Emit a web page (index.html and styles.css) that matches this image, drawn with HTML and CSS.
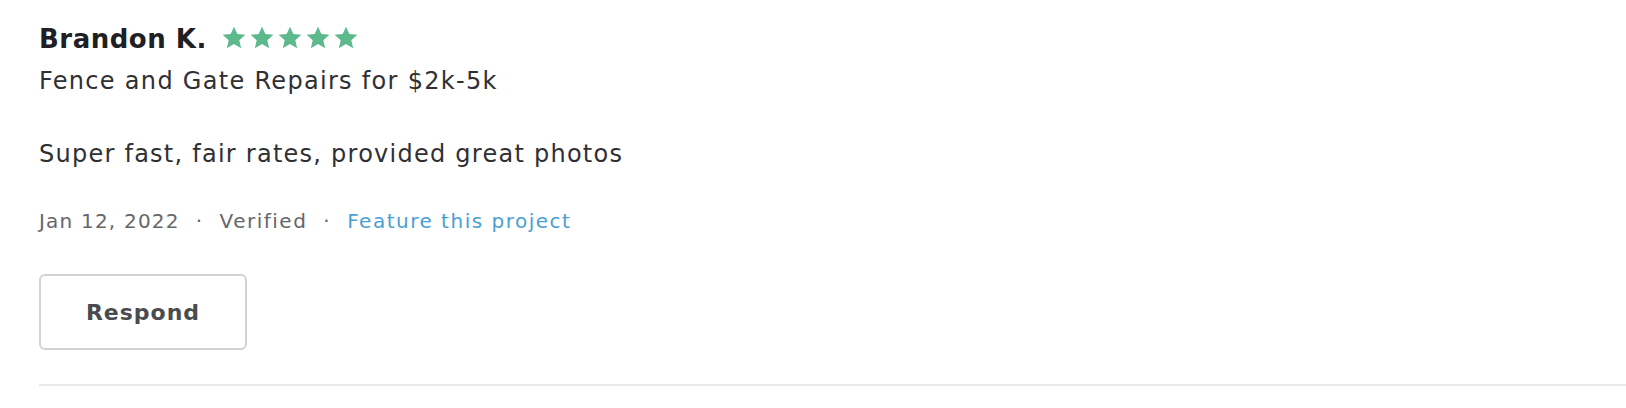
FILE: index.html
```html
<!DOCTYPE html>
<html>
<head>
<meta charset="utf-8">
<link rel="stylesheet" href="styles.css">
</head>
<body>
<div class="review">
  <div class="header">
    <span class="name">Brandon K.</span>
    <span class="stars">
      <svg viewBox="0 0 24 24" class="star"><path d="M12 1.5l3.1 6.9 7.4.7-5.6 5 1.7 7.4L12 17.6l-6.6 3.9 1.7-7.4-5.6-5 7.4-.7z"/></svg>
      <svg viewBox="0 0 24 24" class="star"><path d="M12 1.5l3.1 6.9 7.4.7-5.6 5 1.7 7.4L12 17.6l-6.6 3.9 1.7-7.4-5.6-5 7.4-.7z"/></svg>
      <svg viewBox="0 0 24 24" class="star"><path d="M12 1.5l3.1 6.9 7.4.7-5.6 5 1.7 7.4L12 17.6l-6.6 3.9 1.7-7.4-5.6-5 7.4-.7z"/></svg>
      <svg viewBox="0 0 24 24" class="star"><path d="M12 1.5l3.1 6.9 7.4.7-5.6 5 1.7 7.4L12 17.6l-6.6 3.9 1.7-7.4-5.6-5 7.4-.7z"/></svg>
      <svg viewBox="0 0 24 24" class="star"><path d="M12 1.5l3.1 6.9 7.4.7-5.6 5 1.7 7.4L12 17.6l-6.6 3.9 1.7-7.4-5.6-5 7.4-.7z"/></svg>
    </span>
  </div>
  <div class="project">Fence and Gate Repairs for $2k-5k</div>
  <p class="text">Super fast, fair rates, provided great photos</p>
  <div class="meta">
    <span class="date">Jan 12, 2022</span>
    <span class="dot">·</span>
    <span>Verified</span>
    <span class="dot">·</span>
    <a class="link" href="#">Feature this project</a>
  </div>
  <button class="respond">Respond</button>
</div>
<div class="divider"></div>
</body>
</html>
```
FILE: styles.css
```css
html, body {
  margin: 0;
  padding: 0;
  background: #ffffff;
}
body {
  font-family: "DejaVu Sans", "Noto Sans", sans-serif;
  color: #2f3033;
  padding-left: 39px;
}
.review {
  padding-top: 21px;
}
.header {
  display: flex;
  align-items: center;
  gap: 14px;
  height: 36px;
}
.name {
  font-size: 26px;
  line-height: 36px;
  font-weight: 700;
  letter-spacing: 0.5px;
  color: #1f2023;
}
.stars {
  display: flex;
  gap: 2px;
  margin-top: -2px;
}
.star {
  width: 26px;
  height: 26px;
  fill: #5cb98c;
}
.project {
  font-size: 24px;
  line-height: 30px;
  letter-spacing: 1.3px;
  margin-top: 9px;
}
.text {
  font-size: 24px;
  line-height: 30px;
  letter-spacing: 1.25px;
  margin: 43px 0 0 0;
}
.meta {
  margin-top: 40px;
  font-size: 20px;
  line-height: 24px;
  letter-spacing: 1.5px;
  color: #66676a;
  display: flex;
  align-items: center;
  gap: 16px;
}
.date {
  letter-spacing: 1.2px;
}
.link {
  color: #4a9fd3;
  text-decoration: none;
}
.respond {
  display: block;
  margin-top: 41px;
  width: 208px;
  height: 76px;
  border: 2px solid #d3d3d3;
  border-radius: 6px;
  background: #ffffff;
  font-family: "DejaVu Sans", "Noto Sans", sans-serif;
  font-size: 22px;
  font-weight: 700;
  letter-spacing: 1px;
  color: #4a4b4e;
  cursor: pointer;
}
.divider {
  margin-top: 34px;
  height: 2px;
  background: #ebebeb;
}
```
